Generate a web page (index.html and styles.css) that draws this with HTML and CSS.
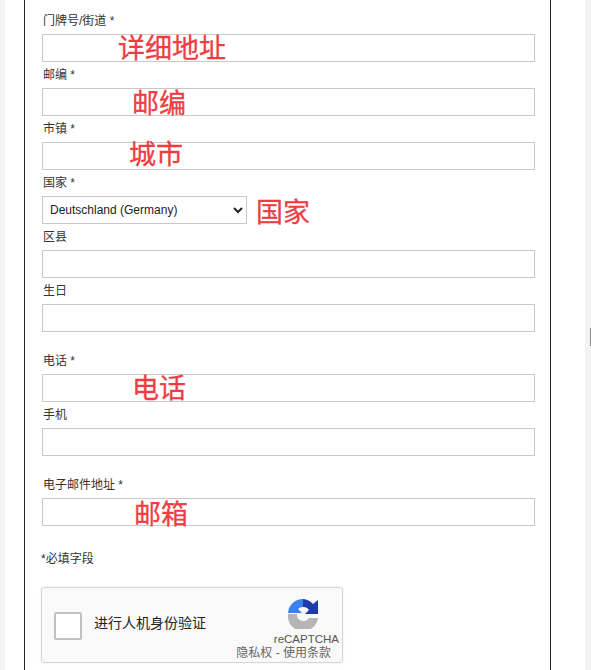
FILE: index.html
```html
<!DOCTYPE html>
<html lang="en">
<head>
    <meta charset="UTF-8">
    <title>地址表单</title>
    <link rel="stylesheet" href="styles.css">
</head>
<body>
    <div class="page">
        <form class="panel">
            <div class="field">
                <label class="field-label">门牌号/街道 *</label>
                <input class="text-input" type="text">
                <span class="note note-street">详细地址</span>
            </div>
            <div class="field">
                <label class="field-label">邮编 *</label>
                <input class="text-input" type="text">
                <span class="note note-zip">邮编</span>
            </div>
            <div class="field">
                <label class="field-label">市镇 *</label>
                <input class="text-input" type="text">
                <span class="note note-city">城市</span>
            </div>
            <div class="field">
                <label class="field-label">国家 *</label>
                <select class="select-input">
                    <option>Deutschland (Germany)</option>
                </select>
                <span class="note note-country">国家</span>
            </div>
            <div class="field">
                <label class="field-label">区县</label>
                <input class="text-input" type="text">
            </div>
            <div class="field">
                <label class="field-label">生日</label>
                <input class="text-input" type="text">
            </div>
            <div class="field group-start">
                <label class="field-label">电话 *</label>
                <input class="text-input" type="text">
                <span class="note note-phone">电话</span>
            </div>
            <div class="field">
                <label class="field-label">手机</label>
                <input class="text-input" type="text">
            </div>
            <div class="field group-start">
                <label class="field-label">电子邮件地址 *</label>
                <input class="text-input" type="text">
                <span class="note note-mail">邮箱</span>
            </div>
            <p class="required-hint">*必填字段</p>
            <div class="captcha">
                <span class="captcha-check"></span>
                <span class="captcha-text">进行人机身份验证</span>
                <div class="captcha-brand">
                    <svg class="captcha-logo" viewBox="0 0 30 31" width="30" height="31">
                        <path fill="#b5b5b5" d="M0 16H9A6.500 6.500 0 0 0 21 20H30A15 15 0 0 1 0 16Z"/>
                        <path fill="#3b80ec" d="M0 15A15 15 0 0 1 15 1V9A6.500 6.500 0 0 0 10 11L14 15H0Z"/>
                        <path fill="#1c3aa9" d="M15 1A15 15 0 0 1 25 6L30 2V16H17L21 12A6.500 6.500 0 0 0 15 9Z"/>
                    </svg>
                    <span class="captcha-name">reCAPTCHA</span>
                    <span class="captcha-links">隐私权 - 使用条款</span>
                </div>
            </div>
        </form>
    </div>
    <span class="scroll-thumb"></span>
</body>
</html>
```
FILE: styles.css
```css
html, body {
    margin: 0;
    height: 670px;
    overflow: hidden;
    background: #fff;
    font-family: "Liberation Sans", "Noto Sans CJK SC", sans-serif;
}
.page {
    box-sizing: border-box;
    width: 591px;
    height: 670px;
    padding: 0 34px 0 19px;
    border-left: 5px solid #f3f3f3;
    border-right: 6px solid #f3f3f3;
}
.panel {
    box-sizing: border-box;
    height: 670px;
    margin: 0;
    padding: 9px 15px 0 17px;
    border-left: 1px solid #222;
    border-right: 1px solid #222;
}
.field {
    position: relative;
}
.group-start {
    margin-top: 17px;
}
.field-label {
    display: block;
    height: 25px;
    line-height: 24px;
    margin-left: 1px;
    font-size: 12px;
    color: #333;
}
.text-input {
    display: block;
    box-sizing: border-box;
    width: 493px;
    height: 28px;
    margin-bottom: 1px;
    border: 1px solid #c8c8c8;
    background: #fff;
    padding: 0 7px;
}
.select-input {
    display: block;
    box-sizing: border-box;
    width: 205px;
    height: 28px;
    margin-bottom: 1px;
    border: 1px solid #c8c8c8;
    border-radius: 0;
    background: #fff;
    padding: 0 3px;
    font-family: inherit;
    font-size: 12px;
    color: #222;
}
.note {
    position: absolute;
    top: 20px;
    font-family: "Noto Sans CJK SC", sans-serif;
    font-size: 27px;
    -webkit-text-stroke: .3px #ee3d42;
    line-height: 36px;
    color: #ee3d42;
    white-space: nowrap;
}
.note-street { left: 76px; }
.note-zip { left: 90px; top: 21px; }
.note-city { left: 87px; top: 18px; }
.note-country { left: 214px; top: 22px; }
.note-phone { left: 90px; }
.note-mail { left: 92px; top: 22px; }
.required-hint {
    margin: 24px 0 0 -1px;
    font-size: 12px;
    line-height: 18px;
    color: #333;
}
.captcha {
    box-sizing: border-box;
    display: flex;
    align-items: center;
    width: 302px;
    height: 76px;
    margin: 19px 0 0 -1px;
    border: 1px solid #d6d6d6;
    border-radius: 3px;
    background: #f9f9f9;
    box-shadow: 0 0 3px rgba(0, 0, 0, .08);
    position: relative;
}
.captcha-check {
    box-sizing: border-box;
    width: 28px;
    height: 28px;
    margin: 0 0 -1px 12px;
    border: 2px solid #c1c1c1;
    border-radius: 2px;
    background: #fff;
}
.captcha-text {
    margin: 0 0 4px 12px;
    font-size: 14px;
    line-height: 18px;
    color: #222;
}
.captcha-brand {
    position: absolute;
    top: 10px;
    right: 3px;
    display: flex;
    flex-direction: column;
    align-items: flex-end;
}
.captcha-logo {
    margin-right: 21px;
}
.captcha-name {
    margin-top: 3px;
    font-size: 11.5px;
    line-height: 14px;
    color: #555;
}
.captcha-links {
    margin-right: 8px;
    font-size: 12px;
    line-height: 15px;
    color: #666;
}
.scroll-thumb {
    position: absolute;
    left: 590px;
    top: 328px;
    width: 1px;
    height: 18px;
    background: #8a8a8a;
}
```
